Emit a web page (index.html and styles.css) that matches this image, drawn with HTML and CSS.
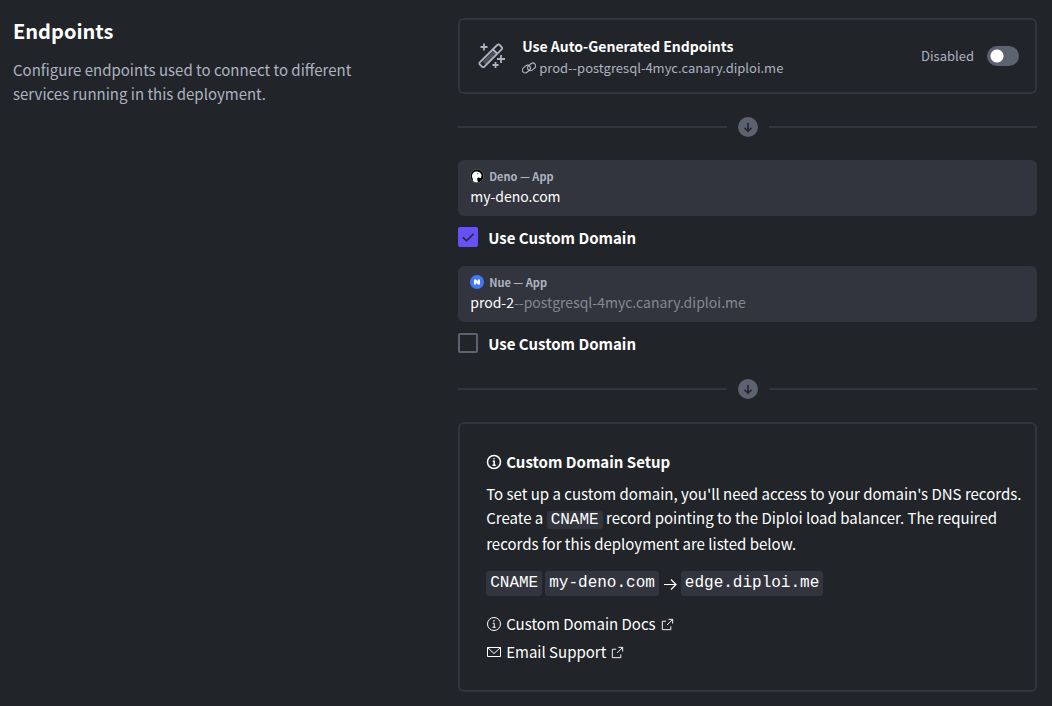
FILE: index.html
```html
<!DOCTYPE html>
<html lang="en">
<head>
<meta charset="utf-8">
<meta name="viewport" content="width=device-width, initial-scale=1">
<title>Endpoints</title>
<link rel="stylesheet" href="styles.css">
</head>
<body>
<svg class="sprite" aria-hidden="true">
  <symbol id="info" viewBox="0 0 16 16"><circle cx="8" cy="8" r="6.5" fill="none" stroke="currentColor"/><path d="M6.7 7.2h1.5v4M6.5 11.3h3.2" fill="none" stroke="currentColor"/><circle cx="8" cy="4.8" r=".8" fill="currentColor"/></symbol>
  <symbol id="external" viewBox="0 0 16 16"><path d="M6.500 4.500H2.500v9h9V10M9 2.500h4.500V7M13.500 2.500 7.500 8.500" fill="none" stroke="currentColor"/></symbol>
  <symbol id="down" viewBox="0 0 20 20"><circle cx="10" cy="10" r="10" fill="#5d6270"/><path d="M10 6v8M6.500 10.700 10 14.200l3.500-3.500" fill="none" stroke="#212428" stroke-width="1.600"/></symbol>
</svg>
<main class="page">
  <header class="intro">
    <h1 class="title">Endpoints</h1>
    <p class="lead">Configure endpoints used to connect to different services running in this deployment.</p>
  </header>

  <div class="settings">
    <section class="card auto">
      <svg class="wand" viewBox="0 0 28 28" aria-hidden="true"><path d="M15.500 8.500 4.500 19.500l4 4L19.500 12.500z" fill="#4b4f5b"/><g fill="none" stroke="currentColor" stroke-width="1.800"><path d="M2 20.200 19.200 3q1.200-1.200 2.400 0l2 2q1.200 1.200 0 2.400L6.400 24.600q-1.200 1.200-2.400 0l-2-2q-1.200-1.200 0-2.400zM15 7.500l4.500 4.500"/><path d="M6 1.500v7M2.500 5h7M23 13v8M19 17h8M17.500 20v6M14.500 23h6"/></g></svg>
      <div class="auto-text">
        <h2 class="card-title compact">Use Auto-Generated Endpoints</h2>
        <p class="host"><svg class="chain" viewBox="0 0 16 16" aria-hidden="true"><g fill="none" stroke="currentColor" stroke-width="1.300"><rect x="0" y="6" width="10" height="6.500" rx="3.250" transform="rotate(-40 5 9.250)"/><rect x="6" y="3.500" width="10" height="6.500" rx="3.250" transform="rotate(-40 11 6.750)"/></g></svg><span>prod--postgresql-4myc.canary.diploi.me</span></p>
      </div>
      <label class="switch-label"><span>Disabled</span><input class="switch" type="checkbox" role="switch"></label>
    </section>

    <div class="divider"><svg class="divider-icon" aria-hidden="true"><use href="#down"/></svg></div>

    <div class="endpoints">
      <section class="endpoint">
        <div class="field">
          <label class="field-label" for="deno"><svg class="badge" viewBox="0 0 14 14" aria-hidden="true"><circle cx="7" cy="7" r="6.700" fill="#000" stroke="#aaa" stroke-width=".4"/><path d="M3 12C3.300 10 2 9 2 7.200 2 4.400 4.300 2.500 7 2.600c2.800.1 4.400 2 4.600 4.200l-.8 2.100-2.800-.4-.9 1.300.8 3.400c-1.800.3-3.500-.1-4.900-1.200z" fill="#fff"/><circle cx="7.800" cy="4.800" r=".5"/></svg>Deno — App</label>
          <div class="field-row"><input class="text-input wide" id="deno" type="text" value="my-deno.com"></div>
        </div>
        <label class="check"><input class="checkbox" type="checkbox" checked><span>Use Custom Domain</span></label>
      </section>
      <section class="endpoint">
        <div class="field">
          <label class="field-label" for="nue"><svg class="badge" viewBox="0 0 14 14" aria-hidden="true"><circle cx="7" cy="7" r="7" fill="#4279f2"/><path d="M4 4.500h2.200l1.800 1.700V4.500h2v5H7.800L6 7.800v1.700H4z" fill="#fff"/></svg>Nue — App</label>
          <div class="field-row"><input class="text-input" id="nue" type="text" value="prod-2"><span class="suffix">--postgresql-4myc.canary.diploi.me</span></div>
        </div>
        <label class="check"><input class="checkbox" type="checkbox"><span>Use Custom Domain</span></label>
      </section>
    </div>

    <div class="divider"><svg class="divider-icon" aria-hidden="true"><use href="#down"/></svg></div>

    <section class="card setup">
      <h2 class="card-title with-icon"><svg class="icon strong" aria-hidden="true"><use href="#info"/></svg>Custom Domain Setup</h2>
      <p class="help">To set up a custom domain, you'll need access to your domain's DNS records. Create a <code class="code">CNAME</code> record pointing to the Diploi load balancer. The required records for this deployment are listed below.</p>
      <div class="record">
        <code class="code chip">CNAME</code>
        <code class="code chip">my-deno.com</code>
        <svg class="icon" viewBox="0 0 16 16" aria-label="points to"><path d="M2 8.500h12M9 3.500l5 5-5 5" fill="none" stroke="currentColor" stroke-width="1.200"/></svg>
        <code class="code chip">edge.diploi.me</code>
      </div>
      <a class="link" href="#docs"><svg class="icon" aria-hidden="true"><use href="#info"/></svg>Custom Domain Docs<svg class="icon small" aria-hidden="true"><use href="#external"/></svg></a>
      <a class="link" href="#support"><svg class="icon" viewBox="0 0 16 16" aria-hidden="true"><path d="M1.500 3.500h13v9h-13zM1.500 3.500 8 9.500l6.500-6" fill="none" stroke="currentColor"/></svg>Email Support<svg class="icon small" aria-hidden="true"><use href="#external"/></svg></a>
    </section>
  </div>
</main>
</body>
</html>
```
FILE: styles.css
```css
* { box-sizing: border-box; }
body {
  margin: 0;
  background: #212428;
  color: #fff;
  font-family: "Noto Sans CJK JP", "Noto Sans", sans-serif;
  font-size: 15px;
  line-height: 24px;
}
h1, h2, p { margin: 0; }
.sprite { display: none; }
.page {
  display: grid;
  grid-template-columns: 10fr 13fr;
  padding: 18px 15px 14px 13px;
}
.intro { padding-right: 92px; }
.title { font-size: 20px; line-height: 26px; font-weight: 700; }
.lead { margin-top: 14px; color: #aeb3c0; }

.card { border: 2px solid #32353e; border-radius: 6px; }
.card-title { font-size: 15px; font-weight: 700; line-height: 24px; }
.compact { font-size: 14px; }
.auto {
  display: flex;
  align-items: center;
  padding: 14px 16px;
}
.wand { width: 28px; height: 28px; margin: 0 16px 0 2px; color: #aeb3c0; flex: none; }
.auto-text { flex: 1; }
.host { display: flex; align-items: center; gap: 3px; color: #aeb3c0; font-size: 13px; line-height: 20px; }
.chain { width: 14px; height: 14px; }
.switch-label { display: flex; align-items: center; gap: 13px; color: #aeb3c0; font-size: 13px; }
.switch {
  appearance: none;
  width: 32px;
  height: 20px;
  margin: 0;
  border-radius: 10px;
  background: radial-gradient(circle at 10px 10px, #fff 6px, transparent 7px) #5d6270;
}
.switch:checked { background: radial-gradient(circle at 22px 10px, #fff 6px, transparent 7px) #6750f8; }

.divider { display: flex; align-items: center; gap: 11px; margin: 23px 0; }
.divider::before, .divider::after { content: ""; flex: 1; height: 2px; background: #32353e; }
.divider-icon { width: 20px; height: 20px; }

.endpoints { display: flex; flex-direction: column; gap: 16px; }
.endpoint { padding-bottom: 1px; }
.field { padding: 8px 12px; border-radius: 6px; background: #32353e; }
.field-label { display: flex; align-items: center; gap: 5px; color: #aeb3c0; font-size: 11px; font-weight: 700; line-height: 16px; }
.badge { width: 14px; height: 14px; }
.field-row { display: flex; font-size: 14px; }
.text-input {
  field-sizing: content;
  height: 24px;
  padding: 0;
  border: 0;
  outline: 0;
  background: none;
  color: #fff;
  font: inherit;
}
.wide { flex: 1; }
.suffix { color: #858893; }
.check { display: flex; align-items: center; gap: 10px; margin-top: 11px; font-weight: 700; line-height: 22px; }
.checkbox {
  appearance: none;
  display: grid;
  place-items: center;
  align-self: flex-start;
  width: 20px;
  height: 20px;
  margin: 0;
  border: 2px solid #5d6270;
  border-radius: 2px;
}
.checkbox:checked { border-color: #6750f8; background: #6750f8; }
.checkbox:checked::before {
  content: "";
  width: 12px;
  height: 12px;
  background: #212428;
  clip-path: polygon(0 56%, 9% 47%, 36% 73%, 91% 18%, 100% 27%, 36% 90%);
}

.setup { display: flex; flex-direction: column; align-items: flex-start; padding: 26px 8px 26px 26px; }
.icon { width: 16px; height: 16px; flex: none; }
.small { width: 15px; height: 15px; }
.strong { stroke-width: 1.5; }
.with-icon { display: flex; align-items: center; gap: 4px; }
.help { margin-top: 8px; }
.code {
  padding: 0 4px;
  border-radius: 3px;
  background: #32353e;
  font-family: "Liberation Mono", monospace;
  font-size: 16px;
}
.record { display: flex; align-items: center; gap: 3px; margin: 15px 0 16px; }
.chip { line-height: 25px; }
.link { display: flex; align-items: center; gap: 4px; color: #fff; line-height: 24px; text-decoration: none; }
.link + .link { margin-top: 4px; }
```
